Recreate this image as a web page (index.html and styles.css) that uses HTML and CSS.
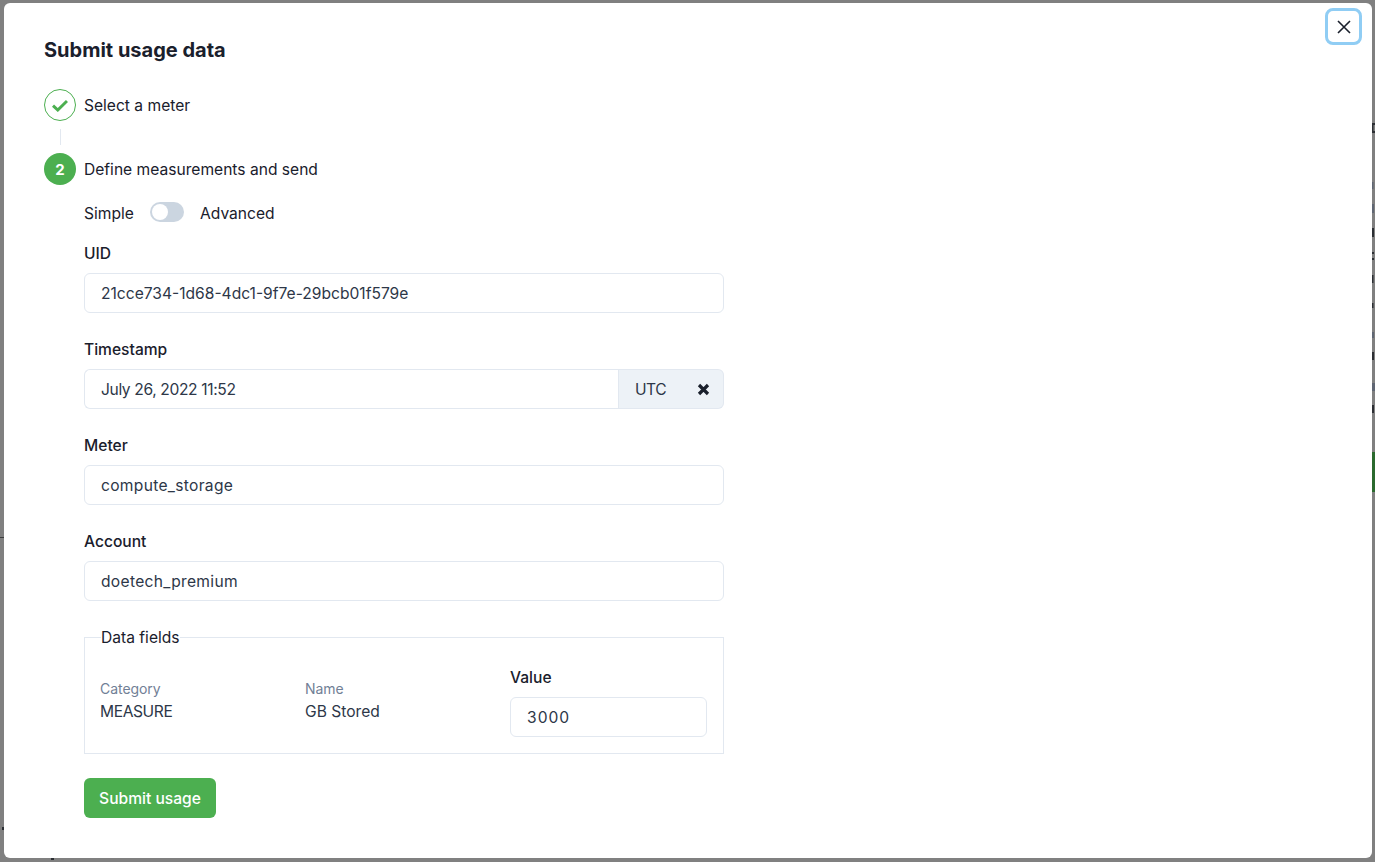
FILE: index.html
```html
<!DOCTYPE html>
<html lang="en">
<head>
<meta charset="utf-8">
<title>Submit usage data</title>
<link rel="stylesheet" href="styles.css">
</head>
<body>
<svg class="backdrop" width="1375" height="862" viewBox="0 0 1375 862" aria-hidden="true">
  <g fill="#2b2e33">
    <rect x="1372" y="123" width="3" height="2"/>
    <rect x="1372" y="123" width="1.5" height="10"/>
    <rect x="1372" y="131" width="3" height="2"/>
    <rect x="1372" y="228" width="2" height="9"/>
    <rect x="1372" y="252" width="2" height="2"/>
    <rect x="1372" y="258" width="2" height="2"/>
    <rect x="1372" y="275" width="1.5" height="8"/>
    <rect x="1372" y="303" width="1.5" height="5"/>
    <rect x="1372" y="352" width="2" height="8"/>
    <rect x="1372" y="405" width="2" height="8"/>
    <rect x="2" y="827" width="2" height="3"/>
    <rect x="51" y="858" width="3" height="2"/>
  </g>
  <g fill="#5f6673">
    <rect x="1372" y="182" width="1.5" height="7"/>
    <rect x="1372" y="204" width="2" height="9"/>
    <rect x="1372" y="332" width="2" height="6"/>
    <rect x="1372" y="383" width="3" height="8"/>
  </g>
  <rect x="1372" y="452" width="3" height="40" fill="#2b6a2e"/>
  <rect x="0" y="537" width="4" height="1" fill="#3c3d3e"/>
</svg>
<div class="modal">
  <button class="close" aria-label="Close">
    <svg width="14" height="14" viewBox="0 0 14 14"><path d="M1 1 13 13M13 1 1 13" stroke="#1a202c" stroke-width="1.6" fill="none"/></svg>
  </button>
  <h2 class="title">Submit usage data</h2>
  <div class="step">
    <span class="badge badge-done">
      <svg width="16" height="13" viewBox="0 0 16 13"><path d="M1 6.6 5.8 11 15 2" stroke="#4caf50" stroke-width="3" fill="none"/></svg>
    </span>
    <span class="step-label">Select a meter</span>
  </div>
  <div class="connector"></div>
  <div class="step">
    <span class="badge badge-active">2</span>
    <span class="step-label">Define measurements and send</span>
  </div>
  <form class="form">
    <div class="mode">
      <span class="mode-text">Simple</span>
      <span class="switch"><span class="knob"></span></span>
      <span>Advanced</span>
    </div>
    <div class="field">
      <label class="label">UID</label>
      <div class="input">21cce734-1d68-4dc1-9f7e-29bcb01f579e</div>
    </div>
    <div class="field">
      <label class="label">Timestamp</label>
      <div class="group">
        <div class="input input-group text-date">July 26, 2022 11:52</div>
        <div class="addon">UTC</div>
        <div class="addon-x">
          <svg width="13" height="13" viewBox="0 0 13 13"><path d="M2 2 11 11M11 2 2 11" stroke="#1a202c" stroke-width="3.2" fill="none"/></svg>
        </div>
      </div>
    </div>
    <div class="field">
      <label class="label">Meter</label>
      <div class="input text-loose">compute_storage</div>
    </div>
    <div class="field">
      <label class="label">Account</label>
      <div class="input text-loose">doetech_premium</div>
    </div>
    <fieldset class="fields">
      <legend class="legend">Data fields</legend>
      <div class="cols">
        <div class="col">
          <div class="meta">Category</div>
          <div class="val val-caps">MEASURE</div>
        </div>
        <div class="col">
          <div class="meta">Name</div>
          <div class="val">GB Stored</div>
        </div>
        <div class="col col-input">
          <label class="label">Value</label>
          <div class="input text-num">3000</div>
        </div>
      </div>
    </fieldset>
    <button class="submit" type="button">Submit usage</button>
  </form>
</div>
</body>
</html>
```
FILE: styles.css
```css
* { box-sizing: border-box; }
html, body { margin: 0; height: 100%; }
body {
  background: #808080;
  font-family: "Inter", "Liberation Sans", sans-serif;
  font-size: 15.6px;
  color: #1a202c;
  padding: 3px 3px 4px 4px;
  overflow: hidden;
  position: relative;
}
.backdrop { position: absolute; left: 0; top: 0; }
.modal {
  position: relative;
  height: 855px;
  background: #fff;
  border-radius: 6px;
  padding: 32px 40px;
}
.close {
  position: absolute;
  top: 5px;
  right: 10px;
  width: 37px;
  height: 37px;
  border: 3px solid #90cdf4;
  border-radius: 8px;
  background: #fff;
  padding: 0;
  display: flex;
  align-items: center;
  justify-content: center;
}
.title { margin: 0; font-size: 20px; font-weight: 700; line-height: 30px; height: 30px; }
.step { display: flex; align-items: center; gap: 8px; height: 32px; margin-top: 24px; }
.connector + .step { margin-top: 8px; }
.badge {
  width: 32px;
  height: 32px;
  border-radius: 50%;
  display: flex;
  align-items: center;
  justify-content: center;
  flex: none;
}
.badge-done { border: 1px solid #4caf50; }
.badge-active { background: #4caf50; color: #fff; font-weight: 700; font-size: 15px; }
.connector { width: 1px; height: 16px; margin: 8px 0 0 16px; background: #e2e8f0; }
.form { width: 640px; margin-left: 40px; }
.mode { display: flex; align-items: center; height: 24px; margin-top: 16px; }
.mode-text { width: 66px; }
.switch { width: 34px; height: 20px; border-radius: 10px; background: #cbd5e0; padding: 2px; display: block; margin: 0 16px 2px 0; }
.knob { display: block; width: 16px; height: 16px; border-radius: 50%; background: #fff; }
.field { margin-top: 16px; }
.field + .field { margin-top: 24px; }
.label { display: block; font-weight: 500; line-height: 26px; height: 24px; margin-bottom: 8px; }
.input {
  height: 40px;
  border: 1px solid #e2e8f0;
  border-radius: 6px;
  padding: 0 16px;
  display: flex;
  align-items: center;
  background: #fff;
  color: #2d3748;
}
.text-date { letter-spacing: -0.37px; }
.text-loose { letter-spacing: 0.3px; }
.text-num { letter-spacing: 1px; }
.group { display: flex; height: 40px; }
.input-group { flex: 1; border-radius: 6px 0 0 6px; border-right: 0; }
.addon {
  width: 65px;
  background: #edf2f7;
  border: 1px solid #e2e8f0;
  border-right: 0;
  display: flex;
  align-items: center;
  padding-left: 16px;
  color: #2d3748;
  letter-spacing: -0.5px;
}
.addon-x {
  width: 41px;
  background: #edf2f7;
  border: 1px solid #e2e8f0;
  border-left: 0;
  border-radius: 0 6px 6px 0;
  display: flex;
  align-items: center;
  justify-content: center;
}
.fields {
  margin: 26px 0 0;
  padding: 16px 16px 16px 15px;
  height: 127px;
  border: 1px solid #e2e8f0;
  min-width: 0;
}
.legend { padding: 2px 0 0; margin-left: 1px; line-height: 18px; }
.cols { display: grid; grid-template-columns: 205px 205px 197px; margin-top: 2px; }
.col { padding-top: 14px; }
.col-input { padding-top: 0; }
.meta { font-size: 14px; color: #718096; line-height: 20px; letter-spacing: -0.05px; }
.val { line-height: 24px; margin-top: 1px; color: #2d3748; }
.val-caps { letter-spacing: -0.4px; }
.submit {
  display: block;
  margin-top: 24px;
  width: 132px;
  height: 40px;
  background: #4caf50;
  color: #fff;
  border: 0;
  border-radius: 6px;
  font: 500 15.6px "Inter", "Liberation Sans", sans-serif;
}
```
